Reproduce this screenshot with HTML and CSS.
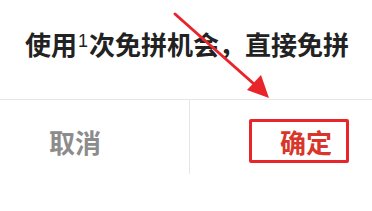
FILE: index.html
```html
<!DOCTYPE html>
<html lang="zh-CN">

<head>
    <meta charset="UTF-8">
    <meta name="viewport" content="width=device-width, initial-scale=1.0">
    <title>免拼</title>
    <link rel="stylesheet" href="styles.css">
</head>

<body>
    <div class="dialog">
        <div class="message">使用<span class="num">1</span>次免拼机会，直接免拼</div>
        <div class="actions">
            <div class="action cancel">取消</div>
            <div class="action confirm">
                <span class="confirm-box">确定</span>
            </div>
        </div>
    </div>

    <!-- annotation arrow -->
    <svg class="arrow" width="372" height="211" viewBox="0 0 372 211">
        <line x1="175" y1="14" x2="254" y2="84" stroke="#e8252b" stroke-width="3" stroke-linecap="round" />
        <polygon points="269,98 247,90 261,75" fill="#e8252b" />
    </svg>
</body>

</html>
```

FILE: styles.css
```css
body {
    margin: 0;
    background: #fff;
    font-family: "Noto Sans CJK SC", "Noto Sans", sans-serif;
}

.dialog {
    width: 372px;
    height: 211px;
}

.message {
    height: 100px;
    box-sizing: border-box;
    padding: 0 0 12px 2px;
    display: flex;
    align-items: center;
    justify-content: center;
    font-size: 26px;
    font-weight: 700;
    color: #222;
    border-bottom: 1px solid #e6e6e6;
}

.message .num {
    font-family: "Liberation Sans", sans-serif;
    font-size: 18px;
    font-weight: 400;
    margin: 0 1px;
    position: relative;
    top: -2px;
}

.actions {
    display: flex;
    height: 74px;
}

.action {
    display: flex;
    align-items: center;
    box-sizing: border-box;
    padding-top: 8px;
    font-size: 26px;
    font-weight: 700;
}

.cancel {
    width: 190px;
    padding-left: 49px;
    color: #8c8c8c;
    border-right: 1px solid #e6e6e6;
}

.confirm {
    flex: 1;
    padding-left: 59px;
}

.confirm-box {
    display: flex;
    align-items: center;
    width: 100px;
    height: 44px;
    box-sizing: border-box;
    padding-left: 28px;
    border: 3px solid #e8252b;
    border-radius: 2px;
    color: #d8352b;
}

.arrow {
    position: absolute;
    left: 0;
    top: 0;
    pointer-events: none;
}
```
